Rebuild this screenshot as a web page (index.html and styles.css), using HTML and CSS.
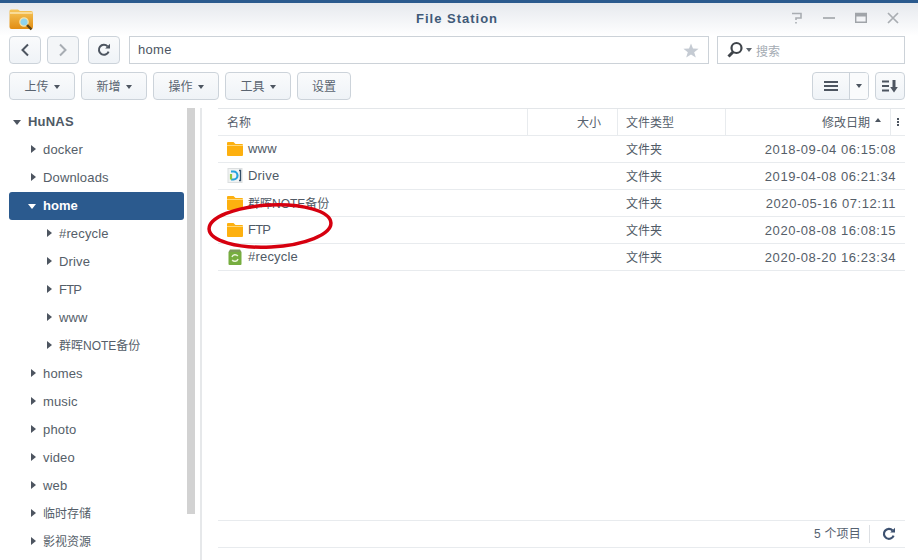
FILE: index.html
```html
<!DOCTYPE html>
<html lang="zh">
<head>
  <meta charset="UTF-8">
  <title>File Station</title>
  <link rel="stylesheet" href="styles.css">
</head>
<body>
  <div class="window">
    <!-- Title bar -->
    <div class="titlebar">
      <svg class="app-icon" width="25" height="22" viewBox="0 0 25 22">
        <defs>
          <linearGradient id="fold" x1="0" y1="0" x2="0" y2="1">
            <stop offset="0" stop-color="#f6c65a"/>
            <stop offset="1" stop-color="#e28d12"/>
          </linearGradient>
        </defs>
        <path d="M0.5 2 Q0.5 0.5 2 0.5 H9 L11 2 H22 Q24 2 24 4 V18 Q24 20 22 20 H2.500 Q0.500 20 0.500 18 Z" fill="url(#fold)"/>
        <path d="M1 4 H23.500" stroke="#fdf0c8" stroke-width="1.2"/>
        <circle cx="15" cy="13" r="4.200" fill="#8fd4ee" stroke="#f7e2a8" stroke-width="1.200"/>
        <path d="M18 16 L22.500 20.500" stroke="#5d4214" stroke-width="2.400"/>
      </svg>
      <div class="title">File Station</div>
      <div class="win-btns">
        <svg width="14" height="14" viewBox="0 0 14 14"><path d="M2 2.500 H11 V7 H6 V9 M6 11 V12.500" fill="none" stroke="#a9adb2" stroke-width="1.600"/></svg>
        <svg width="14" height="14" viewBox="0 0 14 14"><path d="M1 7 H13" stroke="#a0a4a9" stroke-width="1.600"/></svg>
        <svg width="14" height="14" viewBox="0 0 14 14"><path d="M1.700 2.500 H12.300 V11.300 H1.700 Z" fill="none" stroke="#a0a4a9" stroke-width="1.400"/><path d="M2 4 H12" stroke="#a0a4a9" stroke-width="3"/></svg>
        <svg width="14" height="14" viewBox="0 0 14 14"><path d="M2 2 L12 12 M12 2 L2 12" stroke="#a9adb2" stroke-width="1.700"/></svg>
      </div>
    </div>

    <!-- Path row -->
    <div class="toolbar path-row">
      <button class="btn icon-btn">
        <svg width="12" height="14" viewBox="0 0 12 14"><path d="M9 1.500 L3.500 7 L9 12.500" fill="none" stroke="#4d5560" stroke-width="2"/></svg>
      </button>
      <button class="btn icon-btn disabled">
        <svg width="12" height="14" viewBox="0 0 12 14"><path d="M3 1.500 L8.500 7 L3 12.500" fill="none" stroke="#a8adb3" stroke-width="2"/></svg>
      </button>
      <button class="btn icon-btn refresh-btn">
        <svg width="14" height="14" viewBox="0 0 14 14"><path d="M11.600 8.600 A5 5 0 1 1 10.600 3.400" fill="none" stroke="#4d5560" stroke-width="2"/><path d="M8.200 5.600 H13 V0.800 Z" fill="#4d5560"/></svg>
      </button>
      <div class="path-box">
        <span>home</span>
        <svg class="star" width="16" height="15" viewBox="0 0 16 15"><path d="M8 0.500 L10 5.600 L15.600 5.800 L11.200 9.200 L12.800 14.600 L8 11.600 L3.200 14.600 L4.800 9.200 L0.400 5.800 L6 5.600 Z" fill="#c5cbd3"/></svg>
      </div>
      <div class="search-box">
        <svg width="18" height="18" viewBox="0 0 18 18"><circle cx="10.500" cy="7" r="5" fill="none" stroke="#3f444a" stroke-width="2.200"/><path d="M7 11 L2.500 15.500" stroke="#3f444a" stroke-width="3"/></svg>
        <i class="caret small"></i>
        <span>搜索</span>
      </div>
    </div>

    <!-- Action row -->
    <div class="toolbar action-row">
      <button class="btn menu-btn">上传<i class="caret"></i></button>
      <button class="btn menu-btn">新增<i class="caret"></i></button>
      <button class="btn menu-btn">操作<i class="caret"></i></button>
      <button class="btn menu-btn">工具<i class="caret"></i></button>
      <button class="btn plain-btn">设置</button>
      <div class="view-btns">
        <div class="btn view-split">
          <span class="view-main">
            <svg width="14" height="10" viewBox="0 0 14 10"><path d="M0 1 H14 M0 5 H14 M0 9 H14" stroke="#4d5560" stroke-width="2"/></svg>
          </span>
          <span class="view-drop"><i class="caret"></i></span>
        </div>
        <button class="btn sort-btn">
          <svg width="16" height="13" viewBox="0 0 16 13"><path d="M0 1.500 H7 M0 6 H7 M0 10.500 H7" stroke="#4d5560" stroke-width="1.800"/><path d="M12 0 V8" stroke="#4d5560" stroke-width="3"/><path d="M8.200 7 H15.800 L12 12.500 Z" fill="#4d5560"/></svg>
        </button>
      </div>
    </div>

    <div class="body">
      <!-- Folder tree -->
      <div class="sidebar">
        <div class="tree">
          <div class="node root"><i class="arr down"></i>HuNAS</div>
          <div class="node"><i class="arr"></i>docker</div>
          <div class="node"><i class="arr"></i>Downloads</div>
          <div class="node selected"><i class="arr down"></i>home</div>
          <div class="node sub"><i class="arr"></i>#recycle</div>
          <div class="node sub"><i class="arr"></i>Drive</div>
          <div class="node sub"><i class="arr"></i><span class="tight">FTP</span></div>
          <div class="node sub"><i class="arr"></i>www</div>
          <div class="node sub cjk"><i class="arr"></i>群晖NOTE备份</div>
          <div class="node"><i class="arr"></i>homes</div>
          <div class="node"><i class="arr"></i>music</div>
          <div class="node"><i class="arr"></i>photo</div>
          <div class="node"><i class="arr"></i>video</div>
          <div class="node"><i class="arr"></i>web</div>
          <div class="node cjk"><i class="arr"></i>临时存储</div>
          <div class="node cjk"><i class="arr"></i>影视资源</div>
        </div>
        <div class="scrollbar"></div>
      </div>

      <!-- File list -->
      <div class="main">
        <div class="row head">
          <div class="col name">名称</div>
          <div class="col size">大小</div>
          <div class="col type">文件类型</div>
          <div class="col date">修改日期<i class="caret up"></i></div>
          <div class="col more"><i></i><i></i><i></i></div>
        </div>
        <div class="row">
          <div class="col name"><svg class="folder" width="16" height="14" viewBox="0 0 16 14"><path d="M0 1 Q0 0 1 0 H6.500 L8.500 2 H15 Q16 2 16 3 V13 Q16 14 15 14 H1 Q0 14 0 13 Z" fill="#fdb00f"/><path d="M0 3.500 H16" stroke="#ffe9a8" stroke-width="0.700"/></svg><span>www</span></div>
          <div class="col size"></div>
          <div class="col type">文件夹</div>
          <div class="col date">2018-09-04 06:15:08</div>
        </div>
        <div class="row">
          <div class="col name"><svg class="folder" width="16" height="15" viewBox="0 0 16 15"><rect x="1" y="0.500" width="14" height="14" fill="#f1f3f3" stroke="#dcdfe0"/><path d="M4 3.500 H6.500 A4 4 0 0 1 6.500 11.500 H4" fill="none" stroke="#26a3dc" stroke-width="2.200"/><path d="M4 6 V11.500" stroke="#8cc63f" stroke-width="2.200"/><path d="M12 2.500 H13.500 V12.500 H12" fill="none" stroke="#34506b" stroke-width="1.300"/></svg><span>Drive</span></div>
          <div class="col size"></div>
          <div class="col type">文件夹</div>
          <div class="col date">2019-04-08 06:21:34</div>
        </div>
        <div class="row">
          <div class="col name"><svg class="folder" width="16" height="14" viewBox="0 0 16 14"><path d="M0 1 Q0 0 1 0 H6.500 L8.500 2 H15 Q16 2 16 3 V13 Q16 14 15 14 H1 Q0 14 0 13 Z" fill="#fdb00f"/><path d="M0 3.500 H16" stroke="#ffe9a8" stroke-width="0.700"/></svg><span class="cjk">群晖NOTE备份</span></div>
          <div class="col size"></div>
          <div class="col type">文件夹</div>
          <div class="col date">2020-05-16 07:12:11</div>
        </div>
        <div class="row">
          <div class="col name"><svg class="folder" width="16" height="14" viewBox="0 0 16 14"><path d="M0 1 Q0 0 1 0 H6.500 L8.500 2 H15 Q16 2 16 3 V13 Q16 14 15 14 H1 Q0 14 0 13 Z" fill="#fdb00f"/><path d="M0 3.500 H16" stroke="#ffe9a8" stroke-width="0.700"/></svg><span class="tight">FTP</span></div>
          <div class="col size"></div>
          <div class="col type">文件夹</div>
          <div class="col date">2020-08-08 16:08:15</div>
        </div>
        <div class="row">
          <div class="col name"><svg class="folder" width="16" height="16" viewBox="0 0 16 16"><path d="M3 0.500 H13 L14.500 3 H1.500 Z" fill="#7d9a58"/><path d="M1.500 3 H14.500 V15 Q14.500 16 13.500 16 H2.500 Q1.500 16 1.500 15 Z" fill="#76ad3f"/><path d="M5 8 A3.300 3.300 0 0 1 10.800 7 M11 10 A3.300 3.300 0 0 1 5.200 11" fill="none" stroke="#e8f3d8" stroke-width="1.500"/></svg><span>#recycle</span></div>
          <div class="col size"></div>
          <div class="col type">文件夹</div>
          <div class="col date">2020-08-20 16:23:34</div>
        </div>

        <div class="statusbar">
          <span>5 个项目</span>
          <svg width="14" height="14" viewBox="0 0 14 14"><path d="M11.600 8.600 A5 5 0 1 1 10.600 3.400" fill="none" stroke="#3d5170" stroke-width="2.200"/><path d="M8.200 5.600 H13 V0.800 Z" fill="#3d5170"/></svg>
        </div>
      </div>
    </div>

    <!-- hand drawn marker over the FTP row -->
    <svg class="marker" width="130" height="50" viewBox="0 0 130 50">
      <ellipse cx="65" cy="24" rx="61" ry="21" fill="none" stroke="#d6000f" stroke-width="3.500" transform="rotate(-3 65 24)"/>
    </svg>
  </div>
</body>
</html>
```

FILE: styles.css
```css
* {
  margin: 0;
  padding: 0;
  box-sizing: border-box;
}

html, body {
  width: 918px;
  height: 560px;
  overflow: hidden;
  background: white;
}

body {
  font-family: "Liberation Sans", "Noto Sans CJK SC", sans-serif;
  font-size: 13px;
  color: #4c5663;
}

.window {
  position: relative;
  height: 560px;
  border-top: 3px solid #2b5a8e;
  background: white;
  overflow: hidden;
}

.titlebar {
  height: 33px;
  padding: 6px 18px 0 9px;
  display: flex;
  align-items: flex-start;
  background: linear-gradient(180deg, #e6e9ee 0%, #ffffff 100%);
}

.app-icon {
  flex: none;
}

.title {
  flex: 1;
  text-align: center;
  font-size: 13px;
  font-weight: bold;
  letter-spacing: 1px;
  color: #3f5a78;
  line-height: 20px;
  padding-left: 90px;
}

.win-btns {
  display: flex;
  gap: 18px;
  padding-top: 2px;
}

.toolbar {
  display: flex;
  align-items: center;
  padding: 0 13px 0 9px;
}

.path-row {
  height: 28px;
}

.action-row {
  height: 28px;
  margin-top: 8px;
}

.btn {
  height: 28px;
  background: linear-gradient(180deg, #fafbfc 0%, #eff3f7 100%);
  border: 1px solid #ccd3da;
  border-radius: 4px;
  font-family: inherit;
  font-size: 12px;
  color: #5a6470;
  display: flex;
  align-items: center;
  justify-content: center;
}

.icon-btn {
  width: 32px;
  margin-right: 6px;
}

.refresh-btn {
  margin-left: 3px;
  margin-right: 9px;
}

.disabled {
  background: #f4f6f8;
}

.path-box {
  flex: 1;
  height: 28px;
  border: 1px solid #ccd2d8;
  background: white;
  display: flex;
  align-items: center;
  justify-content: space-between;
  padding: 0 9px 2px 8px;
  font-size: 13px;
  letter-spacing: 0.3px;
}

.star {
  margin-top: 2px;
}

.search-box {
  width: 188px;
  height: 28px;
  margin-left: 8px;
  border: 1px solid #ccd2d8;
  background: white;
  display: flex;
  align-items: center;
  padding-left: 8px;
  font-size: 12px;
  color: #a4abb3;
}

.search-box .caret {
  margin: 0 4px 0 2px;
}

.caret {
  display: inline-block;
  width: 0;
  height: 0;
  margin-left: 5px;
  border-left: 3.5px solid transparent;
  border-right: 3.5px solid transparent;
  border-top: 4px solid #4d5560;
}

.caret.small {
  border-left-width: 3px;
  border-right-width: 3px;
  border-top-color: #5d646c;
}

.caret.up {
  margin-left: 5px;
  margin-bottom: 2px;
  border-top: 0;
  border-bottom: 4px solid #4d5560;
}

.menu-btn {
  width: 66px;
  margin-right: 6px;
  padding-bottom: 2px;
}

.menu-btn .caret {
  margin-top: 3px;
}

.plain-btn {
  width: 54px;
  padding-bottom: 2px;
}

.view-btns {
  margin-left: auto;
  display: flex;
  gap: 6px;
}

.view-split {
  width: 57px;
  overflow: hidden;
}

.view-main {
  width: 36px;
  height: 100%;
  display: flex;
  align-items: center;
  justify-content: center;
}

.view-drop {
  flex: 1;
  height: 100%;
  border-left: 1px solid #ccd3da;
  display: flex;
  align-items: center;
  justify-content: center;
  background: #fafbfc;
}

.view-drop .caret {
  margin-left: 0;
}

.sort-btn {
  width: 30px;
}

.body {
  display: flex;
  height: 452px;
  margin-top: 8px;
}

.sidebar {
  position: relative;
  width: 202px;
  flex: none;
  border-right: 2px solid #e6e8ea;
  padding-left: 9px;
}

.tree {
  width: 175px;
}

.node {
  height: 28px;
  line-height: 28px;
  padding-left: 34px;
  position: relative;
  font-size: 13px;
  letter-spacing: 0.15px;
  color: #555e69;
  white-space: nowrap;
}

.node.cjk {
  font-size: 12px;
  letter-spacing: 0;
}

.cjk {
  font-size: 12px;
  letter-spacing: 0;
}

.tight {
  letter-spacing: -0.8px;
}

.node.root {
  height: 28px;
  padding-left: 19px;
  font-weight: bold;
  letter-spacing: 0.2px;
  color: #505a66;
}

.node.sub {
  padding-left: 50px;
}

.node.selected {
  background: #2b5a8e;
  color: white;
  font-weight: bold;
  border-radius: 3px;
  letter-spacing: 0;
}

.arr {
  position: absolute;
  top: 9px;
  left: 22px;
  width: 0;
  height: 0;
  border-top: 4.5px solid transparent;
  border-bottom: 4.5px solid transparent;
  border-left: 5px solid #4d5560;
}

.sub .arr {
  left: 38px;
}

.arr.down {
  top: 12px;
  left: 19px;
  border-left: 4.5px solid transparent;
  border-right: 4.5px solid transparent;
  border-top: 5px solid #4d5560;
  border-bottom: 0;
}

.root .arr.down {
  left: 4px;
}

.selected .arr.down {
  border-top-color: white;
}

.scrollbar {
  position: absolute;
  top: 0;
  left: 187px;
  width: 8px;
  height: 406px;
  background: #d2d2d2;
}

.main {
  position: relative;
  flex: 1;
  margin-left: 16px;
  margin-right: 13px;
}

.row {
  display: flex;
  height: 27px;
  align-items: center;
  padding-bottom: 1px;
  border-bottom: 1px solid #e8ebee;
  font-size: 12px;
  color: #505a66;
}

.row.head {
  height: 28px;
  padding-bottom: 0;
  border-top: 1px solid #e3e6e9;
  color: #56606c;
}

.head .col {
  height: 100%;
  padding-bottom: 2px;
  border-right: 1px solid #e8ebee;
}

.col {
  display: flex;
  align-items: center;
  flex: none;
}

.col.name {
  width: 310px;
  padding-left: 9px;
  font-size: 13px;
  letter-spacing: 0.2px;
}

.head .col.name {
  font-size: 12px;
  letter-spacing: 0;
}

.col.size {
  width: 90px;
  justify-content: flex-end;
  padding-right: 16px;
}

.col.type {
  width: 108px;
  padding-left: 8px;
}

.col.date {
  width: 170px;
  justify-content: flex-end;
  padding-top: 1px;
  font-size: 13px;
  letter-spacing: 0.55px;
  color: #555e69;
}

.head .col.date {
  width: 165px;
  padding-top: 0;
  padding-right: 9px;
  font-size: 12px;
  letter-spacing: 0;
}

.head .col.more {
  flex: 1;
  padding-bottom: 0;
  border-right: 0;
  flex-direction: column;
  justify-content: center;
  gap: 1px;
}

.more i {
  width: 2px;
  height: 2px;
  background: #4d5560;
}

.folder {
  flex: none;
  margin-right: 5px;
}

.statusbar {
  position: absolute;
  left: 0;
  right: 0;
  top: 412px;
  height: 28px;
  border-top: 1px solid #e8ebee;
  border-bottom: 1px solid #e8ebee;
  display: flex;
  align-items: center;
  justify-content: flex-end;
  padding-right: 9px;
  font-size: 12px;
  letter-spacing: 0.2px;
  color: #55616f;
}

.statusbar span {
  padding-right: 8px;
  margin-right: 12px;
  border-right: 1px solid #dde0e4;
  line-height: 18px;
}

.marker {
  position: absolute;
  left: 205px;
  top: 199px;
}
```
